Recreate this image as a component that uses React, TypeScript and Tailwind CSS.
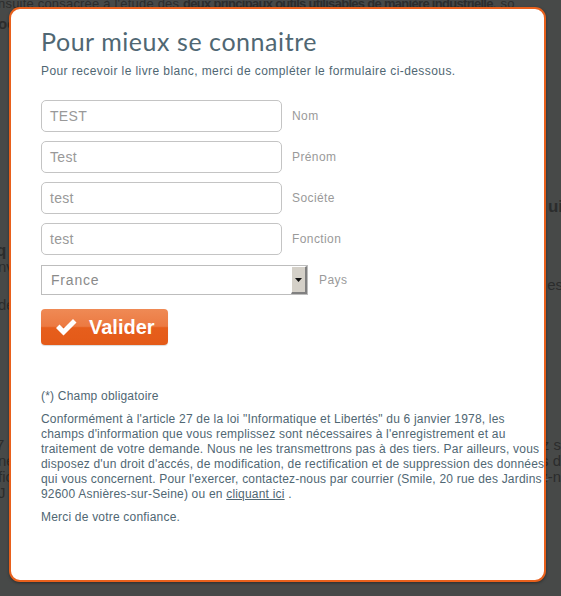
import React from "react";

const bgText = "text-[#2b2c2c] font-['Liberation_Sans',Arial,sans-serif]";

function Field({ value, label }: { value: string; label: string }) {
  return (
    <div className="flex items-center">
      <div className="w-[241px] h-[32px] rounded-[5px] border border-[#c4c4c4] bg-white flex items-center pl-[8px] text-[14px] text-[#999] tracking-[0.3px]">
        {value}
      </div>
      <span className="ml-[10px] text-[12px] text-[#9a9a9a] tracking-[0.4px]">{label}</span>
    </div>
  );
}

export default function App() {
  return (
    <div className="relative w-[561px] h-[596px] overflow-hidden bg-[#474948]">
      {/* background page (under overlay) */}
      <div className={`${bgText} text-[15px] leading-[18px]`}>
        <div className="whitespace-nowrap -ml-[2px] -mt-[5px] text-[13px] tracking-[0.2px]">
          nsuite consacrée à l'étude des <b className="tracking-[-0.7px]">deux principaux outils utilisables de manière industrielle</b>, so
        </div>
        <div className="whitespace-nowrap -ml-[2px] mt-[2px] font-bold">oc</div>
        <div className="flex justify-end mt-[165px] font-bold text-[17px]">
          <span className="-mr-[2px]">ui</span>
        </div>
        <div className="flex mt-[26px] font-bold text-[17px]"><span className="-ml-[4px]">q</span></div>
        <div className="flex mt-[-2px]"><span className="-ml-[2px]">nv</span></div>
        <div className="flex justify-end mt-[0px]"><span className="-mr-[2px]">es</span></div>
        <div className="flex mt-[2px]"><span className="-ml-[2px]">de</span></div>
        <div className="flex justify-between mt-[122px]"><span className="-ml-[4px]">7 d</span><span>z s</span></div>
        <div className="flex justify-between mt-[-2px]"><span className="-ml-[2px]">ne</span><span>s d</span></div>
        <div className="flex justify-between mt-[-2px]"><span className="-ml-[2px]">fic</span><span>z-n</span></div>
        <div className="flex mt-[-2px]"><span className="-ml-[2px]">J</span></div>
      </div>

      {/* modal */}
      <div className="absolute left-[9px] top-[7px] w-[537px] h-[575px] rounded-[11px] border-[2px] border-[#e8601c] bg-white shadow-[0_1px_3px_rgba(0,0,0,0.4)] font-['Liberation_Sans',Arial,sans-serif]">
        <div className="pl-[30px] pt-[17px]">
          <h1 className="font-['Lato',sans-serif] text-[25px] leading-[30px] text-[#506773] tracking-[0.55px]">
            Pour mieux se connaitre
          </h1>
          <p className="mt-[8px] text-[12px] leading-[14px] text-[#506773] tracking-[0.42px]">
            Pour recevoir le livre blanc, merci de compléter le formulaire ci-dessous.
          </p>

          <div className="mt-[22px] flex flex-col gap-[9px]">
            <Field value="TEST" label="Nom" />
            <Field value="Test" label="Prénom" />
            <Field value="test" label="Sociéte" />
            <Field value="test" label="Fonction" />
          </div>

          <div className="mt-[10px] flex items-center">
            <div className="w-[267px] h-[30px] border border-[#bdbdbd] bg-white flex items-stretch">
              <div className="flex-1 flex items-center pl-[9px] text-[14px] text-[#8a8a8a] tracking-[0.8px]">France</div>
              <div className="w-[16px] bg-[#d4d0c8] border-l border-t border-white border-r-[2px] border-b-[2px] border-r-[#808080] border-b-[#808080] flex items-center justify-center">
                <svg width="7" height="4" viewBox="0 0 7 4"><path d="M0 0h7L3.5 4z" fill="#111" /></svg>
              </div>
            </div>
            <span className="ml-[11px] text-[12px] text-[#9a9a9a] tracking-[0.4px]">Pays</span>
          </div>

          <button className="mt-[14px] w-[127px] h-[36px] rounded-[4px] bg-[linear-gradient(to_bottom,#ef8a55_0%,#ec7a42_48%,#e65e1c_52%,#e45a18_100%)] flex items-center pl-[13px] shadow-[0_1px_1px_rgba(0,0,0,0.15)]">
            <svg width="24" height="20" viewBox="0 0 24 20">
              <path d="M2 11 L5.5 7.5 L9.5 11.5 L19 2 L22.5 5.5 L9.5 18.5 Z" fill="#fff" />
            </svg>
            <span className="ml-[11px] text-[20px] font-bold text-white leading-none">Valider</span>
          </button>

          <div className="mt-[44px] text-[12px] leading-[15px] text-[#506773] w-[509px] tracking-[0.2px]">
            <p>(*) Champ obligatoire</p>
            <p className="mt-[8px]">
              Conformément à l'article 27 de la loi "Informatique et Libertés" du 6 janvier 1978, les champs d'information que vous remplissez sont nécessaires à l'enregistrement et au traitement de votre demande. Nous ne les transmettrons pas à des tiers. Par ailleurs, vous disposez d'un droit d'accés, de modification, de rectification et de suppression des données qui vous concernent. Pour l'exercer, contactez-nous par courrier (Smile, 20 rue des Jardins&nbsp;- 92600 Asnières-sur-Seine) ou en <a className="underline">cliquant ici</a> .
            </p>
            <p className="mt-[8px]">Merci de votre confiance.</p>
          </div>
        </div>
      </div>
    </div>
  );
}
